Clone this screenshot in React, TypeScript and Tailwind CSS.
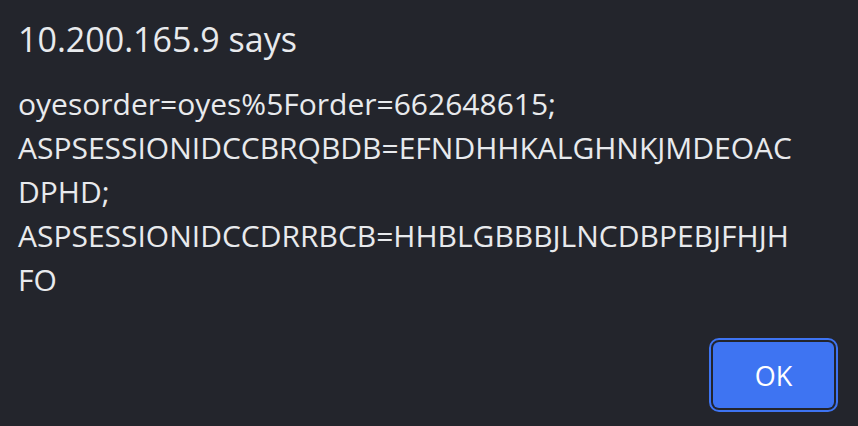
import React from 'react';

const lines = [
  'oyesorder=oyes%5Forder=662648615;',
  'ASPSESSIONIDCCBRQBDB=EFNDHHKALGHNKJMDEOAC',
  'DPHD;',
  'ASPSESSIONIDCCDRRBCB=HHBLGBBBJLNCDBPEBJFHJH',
  'FO',
];

const App: React.FC = () => {
  return (
    <div
      className="w-[858px] h-[426px] bg-[#23252c] text-[#e8eaed] flex flex-col px-[18px] overflow-hidden"
      style={{ fontFamily: '"Open Sans", "Noto Sans", sans-serif' }}
    >
      <h1 className="mt-[16px] text-[34px] leading-[46px] font-normal">10.200.165.9 says</h1>
      <div className="mt-[20px] text-[30px] leading-[44px]">
        {lines.map((line) => (
          <div key={line} className="whitespace-nowrap">
            {line}
          </div>
        ))}
      </div>
      <div className="mt-auto mb-[14px] flex justify-end pr-[2px]">
        <div className="rounded-[10px] border-2 border-[#3e74f2] p-[2px]">
          <button className="w-[121px] h-[66px] rounded-[6px] bg-[#3e74f2] text-white text-[27px] leading-none">
            OK
          </button>
        </div>
      </div>
    </div>
  );
};

export default App;
